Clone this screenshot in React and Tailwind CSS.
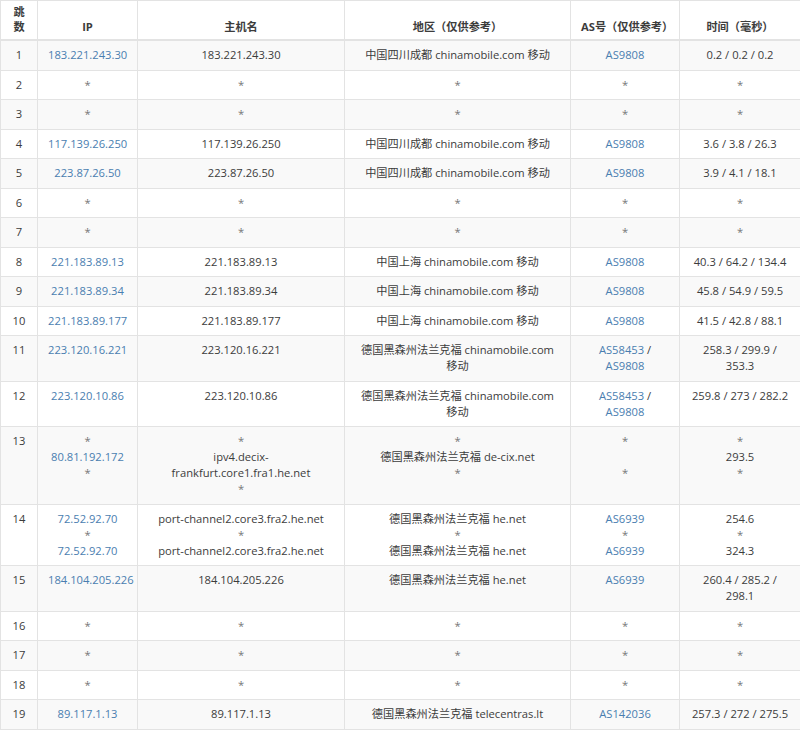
const CN_SC = '中国四川成都 chinamobile.com 移动'
const CN_SH = '中国上海 chinamobile.com 移动'
const DE_CM = '德国黑森州法兰克福 chinamobile.com 移动'
const DE_HE = '德国黑森州法兰克福 he.net'

const star = { ip: ['*'], host: ['*'], region: ['*'], as: ['*'], time: ['*'] }

const one = (ip, region, as, time) => ({ ip: [ip], host: [ip], region: [region], as: [as], time: [time] })

const HOPS = [
  one('183.221.243.30', CN_SC, 'AS9808', '0.2 / 0.2 / 0.2'),
  star,
  star,
  one('117.139.26.250', CN_SC, 'AS9808', '3.6 / 3.8 / 26.3'),
  one('223.87.26.50', CN_SC, 'AS9808', '3.9 / 4.1 / 18.1'),
  star,
  star,
  one('221.183.89.13', CN_SH, 'AS9808', '40.3 / 64.2 / 134.4'),
  one('221.183.89.34', CN_SH, 'AS9808', '45.8 / 54.9 / 59.5'),
  one('221.183.89.177', CN_SH, 'AS9808', '41.5 / 42.8 / 88.1'),
  one('223.120.16.221', DE_CM, 'AS58453 / AS9808', '258.3 / 299.9 / 353.3'),
  one('223.120.10.86', DE_CM, 'AS58453 / AS9808', '259.8 / 273 / 282.2'),
  {
    ip: ['*', '80.81.192.172', '*'],
    host: ['*', 'ipv4.decix-frankfurt.core1.fra1.he.net', '*'],
    region: ['*', '德国黑森州法兰克福 de-cix.net', '*'],
    as: ['*', '', '*'],
    time: ['*', '293.5', '*'],
  },
  {
    ip: ['72.52.92.70', '*', '72.52.92.70'],
    host: ['port-channel2.core3.fra2.he.net', '*', 'port-channel2.core3.fra2.he.net'],
    region: [DE_HE, '*', DE_HE],
    as: ['AS6939', '*', 'AS6939'],
    time: ['254.6', '*', '324.3'],
  },
  one('184.104.205.226', DE_HE, 'AS6939', '260.4 / 285.2 / 298.1'),
  star,
  star,
  star,
  one('89.117.1.13', '德国黑森州法兰克福 telecentras.lt', 'AS142036', '257.3 / 272 / 275.5'),
]

const link = 'text-[#4a7eb0]'

function Line({ text, linked }) {
  if (text === '') return <div>&nbsp;</div>
  if (text === '*') return <div className="text-[#777]">*</div>
  if (!linked) return <div>{text}</div>
  const parts = text.split(' / ')
  return (
    <div>
      {parts.map((p, i) => (
        <span key={i}>
          {i > 0 && ' / '}
          <a className={link}>{p}</a>
        </span>
      ))}
    </div>
  )
}

const td = 'border border-[#e3e3e3] px-[10px] py-[6.25px] align-top text-center'
const th = 'border border-[#e3e3e3] border-b-2 px-[10px] pt-[3px] pb-[5px] align-bottom text-center font-bold leading-[15px]'

export default function App() {
  return (
    <div className="bg-white w-[800px] min-h-[731px] text-[11.2px] leading-4 text-[#3c3c3c] font-['Open_Sans','Noto_Sans_CJK_SC',sans-serif]">
      <table className="w-full table-fixed border-collapse">
        <colgroup>
          <col className="w-[37px]" />
          <col className="w-[100px]" />
          <col className="w-[207px]" />
          <col className="w-[226px]" />
          <col className="w-[109px]" />
          <col className="w-[121px]" />
        </colgroup>
        <thead>
          <tr>
            <th className="border border-[#e3e3e3] border-b-2 px-[9px] pt-[3px] pb-[5px] align-bottom text-center font-bold leading-[15px]">跳数</th>
            <th className={th}>IP</th>
            <th className={th}>主机名</th>
            <th className={th}>地区（仅供参考）</th>
            <th className={th}>AS号（仅供参考）</th>
            <th className={th}>时间（毫秒）</th>
          </tr>
        </thead>
        <tbody>
          {HOPS.map((h, i) => (
            <tr key={i} className={i % 2 === 0 ? 'bg-[#f9f9f9]' : 'bg-white'}>
              <td className="border border-[#e3e3e3] px-[4px] py-[6.25px] align-top text-center">{i + 1}</td>
              <td className={td}>{h.ip.map((t, j) => <Line key={j} text={t} linked />)}</td>
              <td className={td}>{h.host.map((t, j) => <Line key={j} text={t} />)}</td>
              <td className={td}>{h.region.map((t, j) => <Line key={j} text={t} />)}</td>
              <td className={td}>{h.as.map((t, j) => <Line key={j} text={t} linked />)}</td>
              <td className={td}>{h.time.map((t, j) => <Line key={j} text={t} />)}</td>
            </tr>
          ))}
        </tbody>
      </table>
    </div>
  )
}
